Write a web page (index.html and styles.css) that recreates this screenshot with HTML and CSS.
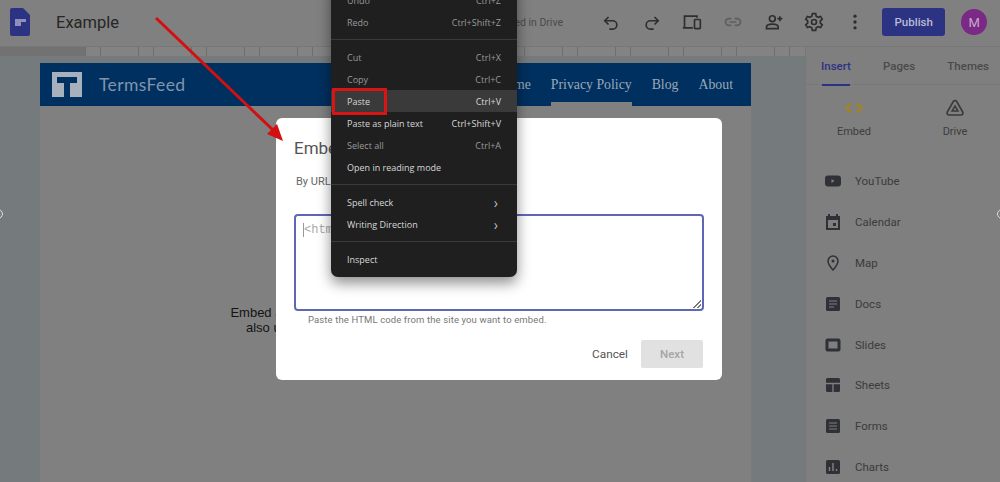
FILE: index.html
```html
<!DOCTYPE html>
<html lang="en">
<head>
<meta charset="utf-8">
<title>Example</title>
<link rel="stylesheet" href="styles.css">
</head>
<body>
<div class="app">
  <header class="topbar">
    <svg class="logo" width="20" height="28" viewBox="0 0 20 28"><path d="M2 0h11l7 7v19a2 2 0 0 1-2 2H2a2 2 0 0 1-2-2V2a2 2 0 0 1 2-2z" fill="#2c3382"/><rect x="5" y="11" width="11" height="7" fill="#8d90b8"/><rect x="11" y="14" width="5" height="4" fill="#2c3382"/></svg>
    <div class="doc-title">Example</div>
    <div class="saved">All changes saved in Drive</div>
    <div class="tools">
      <svg class="tool t-undo" width="20" height="20" viewBox="0 0 24 24"><path d="M9 6L4.500 10.500 9 15M5 10.500h9a5 5 0 0 1 0 10h-4" fill="none" stroke="#2e2e2e" stroke-width="2"/></svg>
      <svg class="tool t-redo" width="20" height="20" viewBox="0 0 24 24"><path d="M15 6l4.500 4.500L15 15M19 10.500h-9a5 5 0 0 0 0 10h4" fill="none" stroke="#2e2e2e" stroke-width="2"/></svg>
      <svg class="tool t-dev" width="20" height="20" viewBox="0 0 24 24"><path d="M3 18V5h15v2M1 19h12" fill="none" stroke="#2e2e2e" stroke-width="2"/><rect x="15" y="9" width="7" height="11" rx="1" fill="none" stroke="#2e2e2e" stroke-width="2"/></svg>
      <svg class="tool t-link" width="20" height="20" viewBox="0 0 24 24"><path d="M10 8H7a4 4 0 0 0 0 8h3M14 8h3a4 4 0 0 1 0 8h-3M8 12h8" fill="none" stroke="#5e5e5e" stroke-width="2"/></svg>
      <svg class="tool t-user" width="20" height="20" viewBox="0 0 24 24"><circle cx="10" cy="8" r="3.500" fill="none" stroke="#2e2e2e" stroke-width="2"/><path d="M3 20v-2c0-2.500 4-3.500 7-3.500s7 1 7 3.500v2zM19 5v6M16 8h6" fill="none" stroke="#2e2e2e" stroke-width="2"/></svg>
      <svg class="tool t-gear" width="20" height="20" viewBox="0 0 24 24"><path d="M10 2h4l.6 3 2.400 1.300 2.900-1 2 3.400-2.300 2v2.600l2.300 2-2 3.400-2.900-1-2.400 1.300-.6 3h-4l-.6-3L7 17.700l-2.900 1-2-3.400 2.300-2v-2.600l-2.300-2 2-3.400 2.900 1L9.400 5z" fill="none" stroke="#2e2e2e" stroke-width="2"/><circle cx="12" cy="12" r="3" fill="none" stroke="#2e2e2e" stroke-width="2"/></svg>
      <svg class="tool t-more" width="20" height="20" viewBox="0 0 24 24"><circle cx="12" cy="5" r="2" fill="#2e2e2e"/><circle cx="12" cy="12" r="2" fill="#2e2e2e"/><circle cx="12" cy="19" r="2" fill="#2e2e2e"/></svg>
    </div>
    <div class="publish">Publish</div>
    <div class="avatar">M</div>
  </header>
  <div class="workspace">
    <main class="canvas">
      <div class="ruler"><div class="ruler-track"></div></div>
      <div class="page">
        <div class="banner">
          <div class="brand-mark"><span class="brand-bar"></span><span class="brand-stem"></span></div>
          <div class="brand-name">TermsFeed</div>
          <nav class="site-nav">
            <span class="nav-item">Home</span>
            <span class="nav-item nav-active">Privacy Policy</span>
            <span class="nav-item">Blog</span>
            <span class="nav-item">About</span>
          </nav>
        </div>
        <div class="page-body">
          <p>Embed a YouTube video on your page. You can<br>also use Custom HTML to embed content.</p>
        </div>
      </div>
    </main>
    <aside class="panel">
      <div class="tabs">
        <span class="tab tab-active">Insert</span>
        <span class="tab">Pages</span>
        <span class="tab">Themes</span>
      </div>
      <div class="quick">
        <div class="quick-item">
          <svg width="20" height="20" viewBox="0 0 20 20"><path d="M7 5.500L2.500 10 7 14.500M13 5.500l4.500 4.500-4.500 4.500" fill="none" stroke="#a8850f" stroke-width="2"/></svg>
          <span>Embed</span>
        </div>
        <div class="quick-item">
          <svg width="22" height="20" viewBox="0 0 22 20"><path d="M11 2.500a2 2 0 0 1 1.700 1l6 10.500a2 2 0 0 1-1.700 3H5a2 2 0 0 1-1.700-3l6-10.500a2 2 0 0 1 1.700-1z" fill="none" stroke="#3a3a3a" stroke-width="1.600"/><path d="M11 8l3 5H8z" fill="none" stroke="#3a3a3a" stroke-width="1.500"/></svg>
          <span>Drive</span>
        </div>
      </div>
      <ul class="list">
        <li class="row"><svg width="16" height="16" viewBox="0 0 16 16"><rect y="2.500" width="16" height="11" rx="3" fill="#2f3136"/><path d="M6.500 6v4l3-2z" fill="#7f7f7f"/></svg>YouTube</li>
        <li class="row"><svg width="16" height="16" viewBox="0 0 16 16"><path d="M3 0v2H1v14h14V2h-2V0h-2v2H5V0zM3 6h10v8H3z" fill="#2f3136"/><rect x="8" y="9" width="3" height="3" fill="#2f3136"/></svg>Calendar</li>
        <li class="row"><svg width="16" height="16" viewBox="0 0 16 16"><path d="M8 1a5 5 0 0 0-5 5c0 3.500 5 9 5 9s5-5.500 5-9a5 5 0 0 0-5-5z" fill="none" stroke="#2f3136" stroke-width="1.500"/><circle cx="8" cy="6" r="1.500" fill="#2f3136"/></svg>Map</li>
        <li class="row"><svg width="16" height="16" viewBox="0 0 16 16"><rect x="1" y="1" width="14" height="14" rx="1.500" fill="#2f3136"/><path d="M4 5h8M4 8h8M4 11h5" stroke="#7f7f7f" stroke-width="1.200"/></svg>Docs</li>
        <li class="row"><svg width="16" height="16" viewBox="0 0 16 16"><rect x="2" y="3" width="12" height="10" rx=".5" fill="none" stroke="#2f3136" stroke-width="3"/></svg>Slides</li>
        <li class="row"><svg width="16" height="16" viewBox="0 0 16 16"><rect x="1" y="1" width="14" height="14" rx="1.500" fill="#2f3136"/><path d="M1 6.500h14M8 6.500V15" stroke="#7f7f7f" stroke-width="1.300"/></svg>Sheets</li>
        <li class="row"><svg width="16" height="16" viewBox="0 0 16 16"><rect x="1" y="1" width="14" height="14" rx="1.500" fill="#2f3136"/><path d="M4 5h8M4 8h8M4 11h8" stroke="#7f7f7f" stroke-width="1.200"/></svg>Forms</li>
        <li class="row"><svg width="16" height="16" viewBox="0 0 16 16"><rect x="1" y="1" width="14" height="14" rx="1.500" fill="#2f3136"/><path d="M4.500 12V8M8 12V4M11.500 12v-2" stroke="#7f7f7f" stroke-width="1.500"/></svg>Charts</li>
      </ul>
    </aside>
  </div>

  <span class="edge edge-left"></span>
  <span class="edge edge-right"></span>

  <section class="dialog">
    <h2 class="dialog-title">Embed from the web</h2>
    <div class="dialog-tabs">By URL</div>
    <div class="code-box"><span class="code-text">&lt;html&gt;</span><span class="grip"></span></div>
    <p class="hint">Paste the HTML code from the site you want to embed.</p>
    <div class="dialog-actions">
      <span class="cancel">Cancel</span>
      <span class="next">Next</span>
    </div>
  </section>

  <div class="menu">
    <div class="menu-group">
      <div class="menu-row dim"><span>Undo</span><span>Ctrl+Z</span></div>
      <div class="menu-row dim"><span>Redo</span><span>Ctrl+Shift+Z</span></div>
    </div>
    <div class="menu-group">
      <div class="menu-row dim"><span>Cut</span><span>Ctrl+X</span></div>
      <div class="menu-row dim"><span>Copy</span><span>Ctrl+C</span></div>
      <div class="menu-row hover"><span>Paste</span><span>Ctrl+V</span></div>
      <div class="menu-row"><span>Paste as plain text</span><span>Ctrl+Shift+V</span></div>
      <div class="menu-row dim"><span>Select all</span><span>Ctrl+A</span></div>
      <div class="menu-row"><span>Open in reading mode</span></div>
    </div>
    <div class="menu-group">
      <div class="menu-row"><span>Spell check</span><span class="chev">›</span></div>
      <div class="menu-row"><span>Writing Direction</span><span class="chev">›</span></div>
    </div>
    <div class="menu-group">
      <div class="menu-row"><span>Inspect</span></div>
    </div>
  </div>

  <div class="paste-mark"></div>
  <svg class="arrow" width="1000" height="482" viewBox="0 0 1000 482"><path d="M156 18L273 130" stroke="#d30f0f" stroke-width="3" fill="none"/><path d="M283 141L267 134 277 124z" fill="#d30f0f"/></svg>
</div>
</body>
</html>
```
FILE: styles.css
```css
* { box-sizing: border-box; }
html, body { margin: 0; padding: 0; height: 100%; overflow: hidden; }
body { font-family: "Roboto", "Liberation Sans", sans-serif; color: #2b2b2b; background: #7f7f7f; }
.app { position: relative; width: 1000px; height: 482px; overflow: hidden; display: flex; flex-direction: column; }

.topbar { height: 47px; flex: none; display: flex; align-items: center; padding: 0 13px 2px 10px; background: #808080; border-bottom: 1px solid #777; }
.logo { flex: none; }
.doc-title { margin-left: 26px; width: 64px; flex: none; font: 400 16.500px "Roboto", sans-serif; color: #262626; white-space: nowrap; }
.saved { margin-left: 268px; width: 175px; flex: none; text-align: right; font-size: 10.500px; color: #4b4b4b; white-space: nowrap; }
.tools { display: flex; align-items: center; gap: 20.700px; margin-left: 38px; }
.tool { flex: none; display: block; }
.publish { margin-left: 17px; width: 64px; height: 28px; background: #2c3382; border-radius: 3px; color: #b9bbd4; font-size: 11.500px; font-weight: 500; display: flex; align-items: center; justify-content: center; }
.avatar { margin-left: 16px; width: 26px; height: 26px; border-radius: 50%; background: #7a2a84; color: #c9a8cc; font-size: 13px; display: flex; align-items: center; justify-content: center; }

.workspace { flex: 1; display: flex; min-height: 0; }
.canvas { width: 805px; flex: none; background: #757a7c; padding-left: 40px; padding-right: 54px; display: flex; flex-direction: column; }
.ruler { height: 16px; flex: none; margin: 0 -54px 0 -40px; padding-left: 85px; background: linear-gradient(#727272 0 9px, transparent 9px); }
.ruler-track { height: 9px; width: 720px; background: repeating-linear-gradient(90deg, #6e6e6e 0 1px, transparent 1px 15px, #6e6e6e 15px 16px, transparent 16px 53px) #838383; }
.page { flex: 1; background: #808080; }
.banner { height: 43px; background: #00305f; display: flex; align-items: center; padding-left: 12px; color: #8c9db2; }
.brand-mark { position: relative; width: 30px; height: 25px; background: #a7b1bd; }
.brand-bar { position: absolute; left: 5px; top: 5px; width: 20px; height: 6px; background: #00305f; }
.brand-stem { position: absolute; left: 12px; top: 9px; width: 6px; height: 16px; background: #00305f; }
.brand-name { margin-left: 17px; font: 400 17.500px "Lato", sans-serif; letter-spacing: .4px; color: #8095ad; }
.site-nav { margin-left: auto; display: flex; height: 100%; gap: 20px; padding-right: 18px; font: 400 13.800px "Liberation Serif", serif; }
.nav-item { display: flex; align-items: center; position: relative; color: #9aa8b9; }
.nav-active::after { content: ""; position: absolute; left: 0; right: 0; bottom: 0; height: 4px; background: #808080; }
.page-body { position: relative; text-align: center; padding-top: 199px; font: 13px/15px "Liberation Sans", sans-serif; color: #141414; }
.page-body p { margin: 0; padding-right: 56px; }

.panel { flex: 1; background: #7f7f7f; border-left: 1px solid #777; }
.tabs { height: 38px; display: flex; align-items: center; justify-content: space-between; padding: 0 11px 0 15px; border-bottom: 1px solid #777; font-size: 11.500px; font-weight: 500; color: #4a4a4a; position: relative; }
.tab-active { color: #2c3382; position: relative; }
.tab-active::after { content: ""; position: absolute; left: 1px; right: 1px; bottom: -13px; height: 2px; background: #2c3382; }
.quick { display: flex; gap: 41px; padding: 13px 0 0 18px; height: 56px; }
.quick-item { width: 60px; flex: none; display: flex; flex-direction: column; align-items: center; gap: 7px; font-size: 11px; color: #3d3d3d; }
.list { list-style: none; margin: 0; padding: 20px 0 0 19px; }
.row { height: 40.800px; display: flex; align-items: center; gap: 14px; font-size: 11.500px; color: #3b3b3b; }

.edge { position: absolute; top: 209px; width: 10px; height: 10px; border-radius: 50%; border: 1.500px solid #ddd; background: #7f7f7f; }
.edge-left { left: -7px; }
.edge-right { right: -7px; }

.dialog { position: absolute; left: 276px; top: 118px; width: 446px; height: 262px; background: #fff; border-radius: 6px; padding: 20px 18px 0 18px; }
.dialog-title { margin: 0; font: 400 17px/20px "Roboto", sans-serif; color: #555; }
.dialog-tabs { margin: 17px 0 0 2px; font: 400 11px/14px "Roboto", sans-serif; color: #666; }
.code-box { position: relative; margin-top: 25px; height: 97px; border: 2px solid #5f67b4; border-radius: 4px; padding: 7px 7px; font: 12px/14px "Liberation Mono", monospace; color: #aaa; }
.code-text { border-left: 1px solid #999; }
.grip { position: absolute; right: 1px; bottom: 1px; width: 8px; height: 8px; background: linear-gradient(135deg, transparent 50%, #777 50% 58%, transparent 58% 74%, #777 74% 82%, transparent 82%); }
.hint { margin: 2px 0 0 14px; font: 9.500px/14px "Roboto", sans-serif; letter-spacing: .12px; color: #777; }
.dialog-actions { margin: 13px 1px 0 0; display: flex; align-items: center; justify-content: flex-end; gap: 13px; }
.cancel { font: 400 11.800px "Roboto", sans-serif; color: #555; }
.next { width: 62px; height: 28px; border-radius: 2px; background: #e1e1e1; color: #a5a5a5; font-size: 11.500px; font-weight: 500; display: flex; align-items: center; justify-content: center; }

.menu { position: absolute; left: 331px; top: -17px; width: 186px; height: 294px; background: #1f1f1f; border-radius: 0 0 7px 7px; box-shadow: 0 6px 14px rgba(0,0,0,.45); font: 9px "Open Sans", sans-serif; color: #d8d8d8; }
.menu-group { padding: 6px 0; border-bottom: 1px solid #3a3a3a; }
.menu-group:last-child { border-bottom: 0; }
.menu-row { height: 22px; display: flex; align-items: center; justify-content: space-between; padding: 0 16px; }
.menu-row.dim { color: #9a9a9a; }
.menu-row.hover { background: #3a3a3a; color: #d8d8d8; }
.chev { font-size: 14px; color: #bbb; margin-right: 3px; }

.paste-mark { position: absolute; left: 332px; top: 88px; width: 55px; height: 27px; border: 3px solid #d81414; }
.arrow { position: absolute; left: 0; top: 0; pointer-events: none; }
```
